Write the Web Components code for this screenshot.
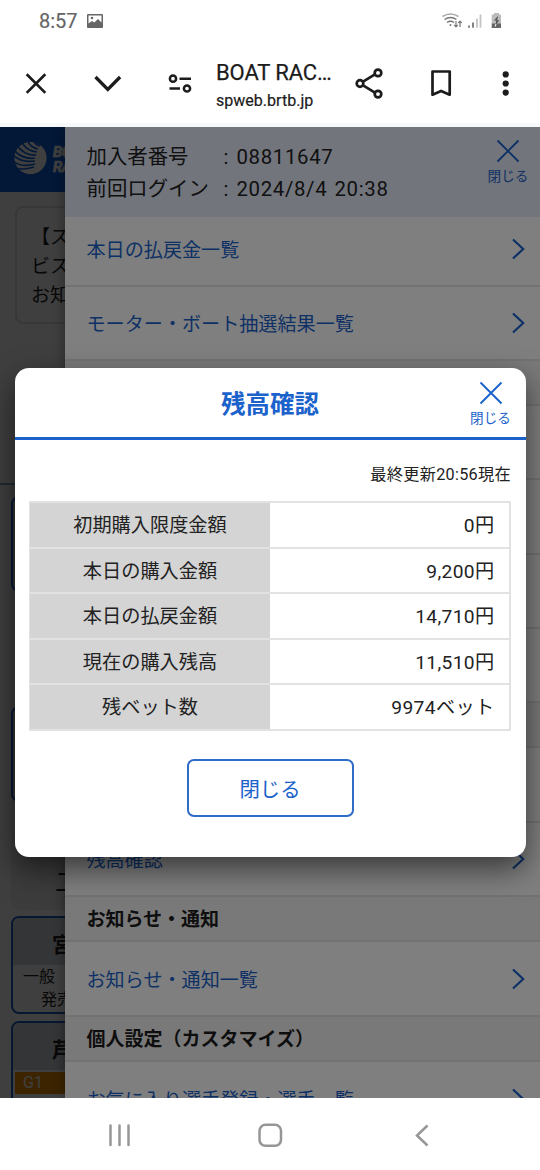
<!DOCTYPE html>
<html lang="ja">
<head>
<meta charset="utf-8">
<title>残高確認</title>
<style>
html,body{margin:0;padding:0;background:#fff}
body{width:540px;height:1170px;overflow:hidden;font-family:Roboto,"Noto Sans CJK JP",sans-serif;color:#222;--blue:#1b62cb}
</style>
</head>
<body>
<phone-screen></phone-screen>
<script>
const define=(name,css,html)=>customElements.define(name,class extends HTMLElement{
  constructor(){
    super();
    const t=document.createElement('template');
    t.innerHTML='<style>*{box-sizing:border-box}'+css+'</style>'+html;
    this.attachShadow({mode:'open'}).append(t.content.cloneNode(true));
  }
});

define('status-bar',`
:host{display:flex;align-items:center;height:42px;padding:0 39px 0 39px;color:#666}
.time{font-size:20px;line-height:43px;width:48px;white-space:nowrap;-webkit-text-stroke:.2px}
.right{margin-left:auto;display:block}
svg{display:block}`,`
<span class="time">8:57</span>
<svg width="16" height="14" viewBox="0 0 16 14"><path fill="#666" fill-rule="evenodd" d="M1 0h14q1 0 1 1v12q0 1-1 1H1q-1 0-1-1V1q0-1 1-1zM1.500 1.500v8l3.500-2.500 2.300 1.500L11 5l3.500 3.500V1.500z"/><circle cx="5" cy="4" r="1.300" fill="#666"/></svg>
<svg class="right" width="62" height="18" viewBox="439 12 62 18" fill="none" stroke="#777" stroke-width="1.500">
<path stroke="#aaa" d="M442.500 16.500q8-5 16 0"/><path d="M444.500 19.500q6-4 12 0M447 22.500q3.500-2.500 7 0"/><circle cx="450.500" cy="25" r="1" fill="#777" stroke="none"/>
<path stroke-width="1.200" d="M456 21v5.500M454.300 25l1.700 1.800 1.700-1.800M460 27v-5.500M458.300 23l1.700-1.800 1.700 1.800"/>
<path stroke-width="1.800" d="M469 25.500v2.300M473 22.500v5.300"/><path stroke-width="1.800" stroke="#c4c4c4" d="M477 18.500v9.300M480.500 14.500v13.300"/>
<path fill="#bbb" stroke="none" d="M494 13h5v1.500h2.300V24h-9.600v-9.500h2.300z"/><path fill="#666" stroke="none" d="M491.700 23.500h9.600V28h-9.600z"/><path fill="#555" stroke="none" d="M497.500 16.500l-3.500 4h2.200l-.5 4.500 3.600-4.800h-2.200l1-3.700z"/>
<path stroke="#fff" stroke-width="1" d="M496 24l-.8 2.500"/>
</svg>`);

define('browser-toolbar',`
:host{display:flex;height:85px;border-bottom:4px solid #f7f8f9;position:relative;background:#fff}
svg.l,svg.r{display:block;flex:none}
.t{width:120px;padding:18px 0 0 1px;flex:none;color:#1c1c1c;white-space:nowrap}
b,i{display:block;font-style:normal;font-weight:400}
b{font-size:22px;line-height:26px;letter-spacing:-.1px;-webkit-text-stroke:.25px}
i{font-size:16px;line-height:22px;margin-top:4px;letter-spacing:.02px;-webkit-text-stroke:.2px}`,`
<svg class="l" width="215" height="81" viewBox="0 42 215 81" fill="none" stroke="#1c1c1c" stroke-width="2.700">
<path d="M26.700 74.300l18.600 18.600M45.300 74.300L26.700 92.900"/><path stroke-width="3.300" d="M95.500 77l12.300 12.300L120.100 77"/>
<g stroke-width="2.500"><circle cx="173" cy="78.700" r="3.100"/><path d="M179.500 78.700h11.500M169.500 88.500H180"/><circle cx="187" cy="88.500" r="3.100"/></g></svg>
<div class="t"><b>BOAT RAC…</b><i>spweb.brtb.jp</i></div>
<svg class="r" width="205" height="81" viewBox="335 42 205 81" fill="none" stroke="#1c1c1c" stroke-width="2.700">
<path d="M374.500 74.700L363.500 81.400M363.500 85.600L374.500 92.300"/><circle cx="378" cy="72.900" r="3.300"/><circle cx="360" cy="83.500" r="3.300"/><circle cx="378" cy="94.100" r="3.300"/>
<path stroke-width="2.700" stroke-linejoin="round" d="M432.500 71.500h17.200V94.700l-8.600-3.800-8.600 3.800z"/>
<g fill="#1c1c1c" stroke="none"><circle cx="505.700" cy="74.400" r="3.100"/><circle cx="505.700" cy="83.500" r="3.100"/><circle cx="505.700" cy="92.600" r="3.100"/></g></svg>`);

define('race-card',`
:host{display:block;height:98px;width:90px;border:2px solid #1c5fc8;border-radius:8px;background:#fff;overflow:hidden;white-space:nowrap;color:#222}
.h{height:47px;background:#d2d6de;padding-left:39px;font:700 21px/50px "Noto Sans CJK JP",sans-serif}
.b{font-size:16px;line-height:23px;padding-left:10px}`,`<div class="h"><slot name="name"></slot></div><div class="b"><slot></slot></div>`);

define('home-page',`
:host{display:flex;flex-direction:column;height:971px;width:540px;background:#fff;overflow:hidden;font-size:19px}
.top{height:65px;background:#0c60df;padding:12px 0 0 13px;display:flex;flex:none}
.logo{font:italic 700 15px/14.500px Roboto,sans-serif;color:#fff;padding-top:6px;margin-left:5px;letter-spacing:-.6px;-webkit-text-stroke:.7px}
.notice{margin:14px 0 0 15px;height:118px;width:300px;border:2px solid #dedede;border-radius:8px;padding:15px 0 0 14px;line-height:29px;flex:none}
.tabs{height:161px;border-bottom:2px solid #8da4cf;flex:none}
.list{margin:0 0 0 11px;background:#f0f0f0;height:425px;flex:none;border-radius:0 0 0 8px;display:flex;flex-direction:column}
.e{height:96px;width:90px;border:2px solid #1c5fc8;border-radius:8px;background:#d2d6de;margin-top:11px}
.e+.e{margin-top:114px}
.two{font-size:25px;line-height:36px;padding:63px 0 0 44px}
race-card{margin:6px 0 0 11px;flex:none}race-card+race-card{margin-top:7px}`,`
<div class="top"><svg width="35" height="38" viewBox="0 0 35 38"><defs><clipPath id="c"><circle cx="17.500" cy="19" r="16.300"/></clipPath></defs>
<g clip-path="url(#c)"><circle cx="17.500" cy="19" r="16.300" fill="#fff"/><g fill="none" stroke="#0c60df" stroke-width="1.700"><path d="M0 16Q8 24 22 22M0 22q8 7 22 3M0 28q8 4 21 0M0 10Q9 21 22 19M3 5Q11 17 23 16M8 1Q12 12 24 13M14 0Q16 8 25 10M19 0Q21 5 27 7"/></g></g></svg><div class="logo">BO<br>RA</div></div>
<div class="notice">【ス<br>ビス<br>お知</div>
<div class="tabs"></div>
<div class="list"><div class="e"></div><div class="e"></div><div class="two">二</div></div>
<race-card><span slot="name">宮</span>一般<div style="padding-left:18px">発売</div></race-card>
<race-card><span slot="name">芦</span><div style="background:#f09000;color:#fff;margin:2px 0 0 -8px;padding-left:8px;line-height:22px">G1</div></race-card>`);

define('close-mark',`
:host{display:flex;flex-direction:column;align-items:center;width:44px;color:var(--blue);font-size:13.600px;line-height:18px;white-space:nowrap}
svg{display:block;margin-bottom:4px}`,`<svg width="24" height="24" viewBox="0 0 24 24" fill="none" stroke="currentColor" stroke-width="1.900"><path d="M1.500 1.500l21 21M22.500 1.500l-21 21"/></svg><span>閉じる</span>`);

define('menu-link',`
:host{display:flex;align-items:center;height:74.200px;border-bottom:2px solid #e4e4e4;padding:1px 15px 0 21.500px;color:var(--blue);font-size:19.100px;flex:none;white-space:nowrap}
svg{margin-left:auto;display:block}`,`<slot></slot><svg width="14" height="22" viewBox="0 0 14 22" fill="none" stroke="currentColor" stroke-width="2.200"><path d="M2 1.500L12.200 11 2 20.500"/></svg>`);

define('menu-heading',`
:host{display:block;height:45.500px;border-bottom:2px solid #e4e4e4;background:#f3f3f3;padding-left:21.500px;font:700 19px/42px "Noto Sans CJK JP",sans-serif;color:#1c1c1c;flex:none;white-space:nowrap}`,`<slot></slot>`);

define('side-menu',`
:host{display:flex;flex-direction:column;background:#fff;width:475px;height:971px;overflow:hidden;box-shadow:0 0 12px rgba(0,0,0,.4)}
.u{height:90px;background:#e6ebf9;display:flex;justify-content:space-between;padding:14px 10px 0 21.500px;flex:none}
.u close-mark{margin-top:-2px}
.g{display:grid;grid-template-columns:137px auto;grid-auto-rows:31.500px;font-size:20.400px;line-height:32px;white-space:nowrap;color:#222}
.g span:nth-child(even){letter-spacing:.65px;word-spacing:1.500px}
.g i{font-style:normal;display:inline-block;width:13px}
menu-link.first{height:69.500px;padding-bottom:4px}`,`
<div class="u"><div class="g"><span>加入者番号</span><span><i>:</i>08811647</span><span>前回ログイン</span><span><i>:</i>2024/8/4 20:38</span></div><close-mark></close-mark></div>
<menu-link class="first">本日の払戻金一覧</menu-link><menu-link>モーター・ボート抽選結果一覧</menu-link>
<menu-heading></menu-heading><menu-link></menu-link><menu-link></menu-link><menu-link></menu-link><menu-link></menu-link>
<menu-heading></menu-heading><menu-link></menu-link><menu-link>残高確認</menu-link>
<menu-heading>お知らせ・通知</menu-heading><menu-link>お知らせ・通知一覧</menu-link>
<menu-heading>個人設定（カスタマイズ）</menu-heading><menu-link>お気に入り選手登録・選手一覧</menu-link>`);

define('balance-row',`
:host{display:grid;grid-template-columns:240px 1fr;height:45.500px;border-bottom:2px solid #e2e2e2;font-size:19.200px;line-height:45px;white-space:nowrap}
div{height:43.500px}
.k{background:#d4d4d4;text-align:center}.v{text-align:right;padding-right:14px;letter-spacing:.35px}`,`<div class="k"><slot name="label"></slot></div><div class="v"><slot></slot></div>`);

define('balance-dialog',`
:host{display:flex;flex-direction:column;width:511px;height:488.500px;background:#fff;border-radius:14px;box-shadow:0 12px 30px rgba(0,0,0,.55)}
header{height:72px;border-bottom:3px solid var(--blue);display:grid;grid-template-columns:80px 1fr 80px;flex:none}
h1{margin:0;text-align:center;color:var(--blue);font:700 24.500px/70px "Noto Sans CJK JP",sans-serif}
close-mark{margin:13px 0 0 23px}
.up{text-align:right;padding-right:14.500px;font-size:16.200px;letter-spacing:.3px;line-height:25px;margin-top:22px;height:39px}
.tb{margin:0 15px 0 14.500px;border:2px solid #e2e2e2;border-left-width:1px;border-bottom:0}
button{display:block;margin:28px auto 0;width:167px;height:58px;border:2px solid #2f6cc6;border-radius:7px;background:#fff;color:var(--blue);font:400 20.400px "Noto Sans CJK JP",sans-serif;padding:0}`,`
<header><span></span><h1>残高確認</h1><close-mark></close-mark></header>
<div class="up">最終更新20:56現在</div>
<div class="tb">
<balance-row><span slot="label">初期購入限度金額</span>0円</balance-row>
<balance-row><span slot="label">本日の購入金額</span>9,200円</balance-row>
<balance-row><span slot="label">本日の払戻金額</span>14,710円</balance-row>
<balance-row><span slot="label">現在の購入残高</span>11,510円</balance-row>
<balance-row><span slot="label">残ベット数</span>9974ベット</balance-row></div>
<button>閉じる</button>`);

define('system-nav',`
:host{display:block;height:72px;background:#fff}svg{display:block}`,`
<svg width="540" height="72" viewBox="0 1098 540 72" fill="none" stroke="#969696" stroke-width="2.500" stroke-linecap="round"><path d="M110.500 1125.500v19.500M119.500 1125.500v19.500M128.500 1125.500v19.500"/><rect x="259.500" y="1124.800" width="21.500" height="21" rx="6"/><path stroke-linecap="butt" d="M427.500 1125.500L417 1135.500l10.500 10"/></svg>`);

define('phone-screen',`
:host{display:block;width:540px;height:1170px;background:#fff;overflow:hidden}
main{position:relative;height:971px;overflow:hidden}
home-page,side-menu,.dim,.top{position:absolute;top:0}
home-page{left:0}side-menu{right:0}
.dim{left:0;width:540px;height:971px;background:rgba(0,0,0,.5)}
.top{left:0;width:540px;height:971px;display:flex;justify-content:center;align-items:flex-start;padding-top:241px;background:rgba(0,0,0,.5)}`,`
<status-bar></status-bar><browser-toolbar></browser-toolbar>
<main><home-page></home-page><div class="dim"></div><side-menu></side-menu><div class="top"><balance-dialog></balance-dialog></div></main>
<system-nav></system-nav>`);
</script>
</body>
</html>
